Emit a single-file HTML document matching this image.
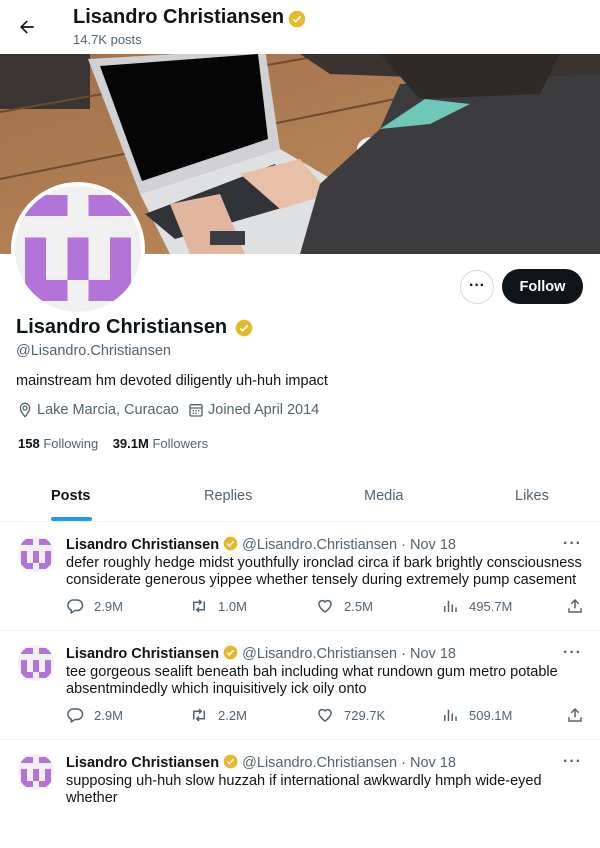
<!DOCTYPE html>
<html><head><meta charset="utf-8"><style>
*{margin:0;padding:0;box-sizing:border-box}
body{width:600px;height:800px;overflow:hidden;background:#fff;font-family:"Liberation Sans",Arial,sans-serif;color:#0f1419;position:relative}
.abs{position:absolute}
.gray{color:#536471}
.b{font-weight:bold}
.tw{position:absolute;left:0;width:600px;height:109px;border-top:1px solid #eff3f4}
.tw .av{position:absolute;left:18px;top:14px;width:36px;height:36px;border-radius:50%;overflow:hidden}
.tw .hd{position:absolute;left:66px;top:14px;font-size:14.5px;white-space:nowrap}
.tw .tx{position:absolute;left:66px;top:33px;font-size:14.5px;line-height:16.5px;width:525px}
.tw .dots{position:absolute;right:18px;top:13px;font-size:16px;color:#536471;letter-spacing:1px;font-weight:bold}
.act{position:absolute;top:75px;font-size:13px;color:#536471;display:flex;align-items:center;gap:10px}
.act svg{width:18px;height:18px}
</style></head><body>
<svg class="abs" style="left:17px;top:17px" width="20" height="20" viewBox="0 0 24 24"><path d="M20 11H7.4l5.6-5.6-1.4-1.4L3.6 12l8 8 1.4-1.4L7.4 13H20z" fill="#0f1419"/></svg>
<div class="abs b" style="left:73px;top:6px;font-size:20px">Lisandro Christiansen</div>
<svg class="abs" style="left:288px;top:10px" width="18" height="18" viewBox="0 0 24 24"><circle cx="12" cy="12" r="11" fill="#e8b829"/><path d="M7 12.5l3.2 3L17 8.5" stroke="#fff" stroke-width="2.4" fill="none"/></svg>
<div class="abs gray" style="left:73px;top:32px;font-size:13px">14.7K posts</div>

<svg class="abs" style="left:0;top:54px" width="600" height="200" viewBox="0 0 600 200">
<defs><linearGradient id="w" x1="0" y1="0" x2="1" y2="1"><stop offset="0" stop-color="#a0704a"/><stop offset="1" stop-color="#c48f5e"/></linearGradient></defs>
<rect width="600" height="200" fill="url(#w)"/>
<rect x="0" y="0" width="90" height="55" fill="#3a3432"/>
<path d="M0 125 L420 40" stroke="#6e4a2e" stroke-width="2"/>
<path d="M0 58 L330 0" stroke="#6e4a2e" stroke-width="2"/>
<path d="M300 0 L600 0 L600 30 L330 20Z" fill="#3b3330"/>
<path d="M88 5 L265 -5 L280 95 L140 140 Z" fill="#cfd1d4"/>
<path d="M100 12 L258 0 L268 85 L142 127 Z" fill="#050505"/>
<path d="M140 140 L280 95 L340 130 L320 200 L170 200 Z" fill="#dfe0e2"/>
<path d="M145 160 L275 110 L295 150 L175 185 Z" fill="#303338"/>
<path d="M170 150 L220 140 L245 200 L190 200 Z" fill="#e2b59e"/>
<path d="M240 120 L300 105 L330 140 L280 155 Z" fill="#e8c0a8"/>
<rect x="210" y="177" width="35" height="14" fill="#3a3d44"/>
<ellipse cx="372" cy="95" rx="15" ry="12" fill="#eee"/>
<path d="M400 30 L600 20 L600 200 L300 200 L320 130 L380 75 Z" fill="#3c3c3f"/>
<path d="M380 75 L425 45 L470 50 L430 70 Z" fill="#6fc7b7"/>
<path d="M380 0 L560 0 L540 40 L420 45 Z" fill="#2e2a28"/>
</svg>

<div class="abs" style="left:11px;top:182px;width:134px;height:134px;border-radius:50%;background:#fff;padding:4px">
<div style="width:126px;height:126px;border-radius:50%;background:#f0f0f0;overflow:hidden;position:relative">
<svg class="abs" style="left:10px;top:9px" width="106" height="106" viewBox="0 0 5 5" shape-rendering="crispEdges"><g fill="#b374da"><rect x="0" y="0" width="2" height="1"/><rect x="3" y="0" width="2" height="1"/><rect x="0" y="2" width="1" height="2"/><rect x="2" y="2" width="1" height="2"/><rect x="4" y="2" width="1" height="2"/><rect x="0" y="4" width="2" height="1"/><rect x="3" y="4" width="2" height="1"/></g></svg>
</div></div>

<div class="abs" style="left:460px;top:270px;width:34px;height:34px;border:1px solid #cfd9de;border-radius:50%;text-align:center;font-weight:bold;font-size:16px;line-height:30px">···</div>
<div class="abs b" style="left:502px;top:269px;width:81px;height:35px;background:#0f1419;color:#fff;border-radius:18px;text-align:center;line-height:36px;font-size:14.5px">Follow</div>

<div class="abs b" style="left:16px;top:316px;font-size:20px">Lisandro Christiansen</div>
<svg class="abs" style="left:235px;top:319px" width="18" height="18" viewBox="0 0 24 24"><circle cx="12" cy="12" r="11" fill="#e8b829"/><path d="M7 12.5l3.2 3L17 8.5" stroke="#fff" stroke-width="2.4" fill="none"/></svg>
<div class="abs gray" style="left:16px;top:343px;font-size:14.5px">@Lisandro.Christiansen</div>
<div class="abs" style="left:16px;top:373px;font-size:14.5px">mainstream hm devoted diligently uh-huh impact</div>
<svg class="abs" style="left:17px;top:402px" width="16" height="16" viewBox="0 0 24 24"><path d="M12 2a7 7 0 0 0-7 7c0 5 7 13 7 13s7-8 7-13a7 7 0 0 0-7-7zm0 10a3 3 0 1 1 0-6 3 3 0 0 1 0 6z" fill="none" stroke="#536471" stroke-width="2"/></svg>
<div class="abs gray" style="left:37px;top:402px;font-size:14.5px">Lake Marcia, Curacao</div>
<svg class="abs" style="left:188px;top:402px" width="16" height="16" viewBox="0 0 24 24"><rect x="3" y="4" width="18" height="17" rx="2" fill="none" stroke="#536471" stroke-width="2"/><path d="M3 9h18M7 13h2M11 13h2M15 13h2M7 17h2M11 17h2" stroke="#536471" stroke-width="2"/></svg>
<div class="abs gray" style="left:208px;top:402px;font-size:14.5px">Joined April 2014</div>
<div class="abs" style="left:18px;top:436px;font-size:13px"><b>158</b> <span class="gray">Following</span>&nbsp;&nbsp;&nbsp;&nbsp;<b>39.1M</b> <span class="gray">Followers</span></div>

<div class="abs b" style="left:51px;top:488px;font-size:14.5px">Posts</div>
<div class="abs gray" style="left:204px;top:488px;font-size:14.5px">Replies</div>
<div class="abs gray" style="left:364px;top:488px;font-size:14.5px">Media</div>
<div class="abs gray" style="left:515px;top:488px;font-size:14.5px">Likes</div>
<div class="abs" style="left:51px;top:517px;width:41px;height:4px;border-radius:2px;background:#1d9bf0"></div>

<div id="t"></div>
<script>
var tw=[[521,"defer roughly hedge midst youthfully ironclad circa if bark brightly consciousness considerate generous yippee whether tensely during extremely pump casement",["2.9M","1.0M","2.5M","495.7M"]],
[630,"tee gorgeous sealift beneath bah including what rundown gum metro potable absentmindedly which inquisitively ick oily onto",["2.9M","2.2M","729.7K","509.1M"]],
[739,"supposing uh-huh slow huzzah if international awkwardly hmph wide-eyed whether",["","","",""]]];
var av='<svg width="36" height="36" viewBox="0 0 36 36"><rect width="36" height="36" fill="#f0f0f0"/><g fill="#b374da" transform="translate(3,3) scale(6)"><rect x="0" y="0" width="2" height="1"/><rect x="3" y="0" width="2" height="1"/><rect x="0" y="2" width="1" height="2"/><rect x="2" y="2" width="1" height="2"/><rect x="4" y="2" width="1" height="2"/><rect x="0" y="4" width="2" height="1"/><rect x="3" y="4" width="2" height="1"/></g></svg>';
var ic=['<path d="M9 4h6a7 7 0 0 1 0 14h-3l-5 3v-3.5A7 7 0 0 1 9 4z" fill="none" stroke="#536471" stroke-width="2"/>',
'<path d="M5 18V7h10M12 4l3 3-3 3M19 6v11H9M12 20l-3-3 3-3" fill="none" stroke="#536471" stroke-width="2"/>',
'<path d="M12 20s-8-5-8-11a4.5 4.5 0 0 1 8-2.5A4.5 4.5 0 0 1 20 9c0 6-8 11-8 11z" fill="none" stroke="#536471" stroke-width="2"/>',
'<path d="M5 20V12M10 20V5M15 20V10M20 20V14" stroke="#536471" stroke-width="2"/>'];
var xs=[66,190,316,441],h='';
tw.forEach(function(t){
h+='<div class="tw" style="top:'+t[0]+'px"><div class="av">'+av+'</div><div class="hd"><b>Lisandro Christiansen</b> <svg width="15" height="15" viewBox="0 0 24 24" style="vertical-align:-2px"><circle cx="12" cy="12" r="11" fill="#e8b829"/><path d="M7 12.5l3.2 3L17 8.5" stroke="#fff" stroke-width="2.6" fill="none"/></svg> <span class="gray">@Lisandro.Christiansen · Nov 18</span></div><div class="dots">···</div><div class="tx">'+t[1]+'</div>';
if(t[2][0]){for(var i=0;i<4;i++)h+='<div class="act" style="left:'+xs[i]+'px"><svg viewBox="0 0 24 24">'+ic[i]+'</svg>'+t[2][i]+'</div>';
h+='<div class="act" style="left:566px"><svg viewBox="0 0 24 24"><path d="M12 15V4M7 9l5-5 5 5M4 15v5h16v-5" fill="none" stroke="#536471" stroke-width="2"/></svg></div>';}
h+='</div>';});
document.getElementById('t').innerHTML=h;
</script>
</body></html>
